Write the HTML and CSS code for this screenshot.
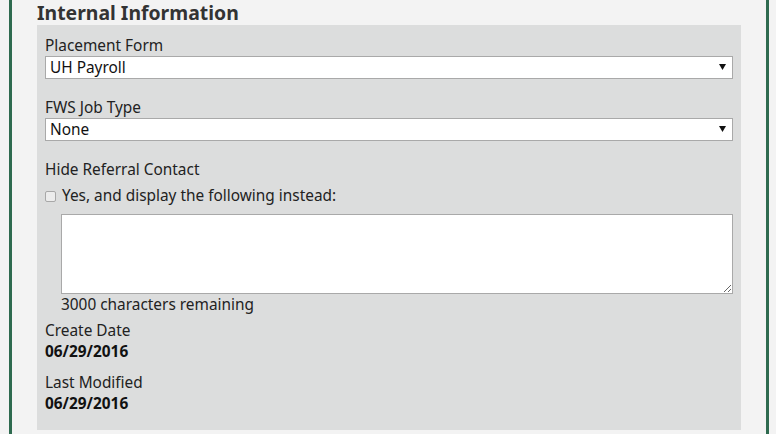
FILE: index.html
```html
<!DOCTYPE html>
<html>
<head>
<meta charset="utf-8">
<link rel="stylesheet" href="styles.css">
</head>
<body>
<div class="frame">
  <h2 class="title">Internal Information</h2>
  <div class="panel">
    <div class="field">
      <div class="label">Placement Form</div>
      <div class="select-wrap">
        <select class="select"><option>UH Payroll</option></select>
        <svg class="arrow" width="7" height="6" viewBox="0 0 7 6"><path d="M0 0H7L3.5 6Z" fill="#111"/></svg>
      </div>
    </div>
    <div class="field">
      <div class="label">FWS Job Type</div>
      <div class="select-wrap">
        <select class="select"><option>None</option></select>
        <svg class="arrow" width="7" height="6" viewBox="0 0 7 6"><path d="M0 0H7L3.5 6Z" fill="#111"/></svg>
      </div>
    </div>
    <div class="field">
      <div class="label">Hide Referral Contact</div>
      <label class="check-row"><input type="checkbox" class="check"><span>Yes, and display the following instead:</span></label>
      <div class="indent">
        <textarea class="textarea"></textarea>
        <div class="remaining">3000 characters remaining</div>
      </div>
    </div>
    <div class="info">
      <div class="label">Create Date</div>
      <div class="value">06/29/2016</div>
    </div>
    <div class="info info-last">
      <div class="label">Last Modified</div>
      <div class="value">06/29/2016</div>
    </div>
  </div>
</div>
</body>
</html>
```
FILE: styles.css
```css
html, body {
  margin: 0;
  padding: 0;
  background: #f3f3f3;
  font-family: "Noto Sans", "Open Sans", sans-serif;
  color: #222;
}
.frame {
  margin-left: 9px;
  width: 760px;
  box-sizing: border-box;
  min-height: 440px;
  border-left: 3px solid #2e6a4f;
  border-right: 3px solid #2e6a4f;
  padding: 0 25px;
}
.title {
  margin: 0;
  font-size: 19.4px;
  line-height: 25px;
  font-weight: 700;
  color: #333;
}
.panel {
  background: #dcdddd;
  padding: 10px 8px 15px 8px;
}
.field {
  margin-bottom: 18px;
}
.label {
  font-size: 15.4px;
  line-height: 21px;
}
.select-wrap {
  position: relative;
}
.select {
  appearance: none;
  -webkit-appearance: none;
  display: block;
  width: 100%;
  height: 23px;
  box-sizing: border-box;
  border: 1px solid #a9a9a9;
  border-radius: 0;
  background: #fff;
  font-family: "Noto Sans", "Open Sans", sans-serif;
  font-size: 15.4px;
  color: #111;
  padding: 0 0 1px 4px;
  margin: 0;
}
.arrow {
  position: absolute;
  right: 7px;
  top: 8px;
  pointer-events: none;
}
.check-row {
  display: flex;
  align-items: center;
  font-size: 15.4px;
  line-height: 22px;
  padding-top: 5px;
}
.check {
  appearance: none;
  -webkit-appearance: none;
  width: 11px;
  height: 11px;
  box-sizing: border-box;
  border: 1px solid #a8a8a8;
  border-radius: 2px;
  background: #ececec;
  margin: 0 6px 0 0;
}
.indent {
  padding-left: 16px;
  margin-top: 7px;
}
.textarea {
  display: block;
  width: 100%;
  height: 80px;
  box-sizing: border-box;
  border: 1px solid #a9a9a9;
  background: #fff;
  margin: 0;
  padding: 2px;
  font-family: "Noto Sans", sans-serif;
}
.remaining {
  font-size: 15.4px;
  line-height: 21px;
}
.info {
  margin-top: -13px;
}
.info-last {
  margin-top: 9px;
}
.value {
  font-size: 15.4px;
  line-height: 22px;
  font-weight: 700;
  color: #111;
}
```
